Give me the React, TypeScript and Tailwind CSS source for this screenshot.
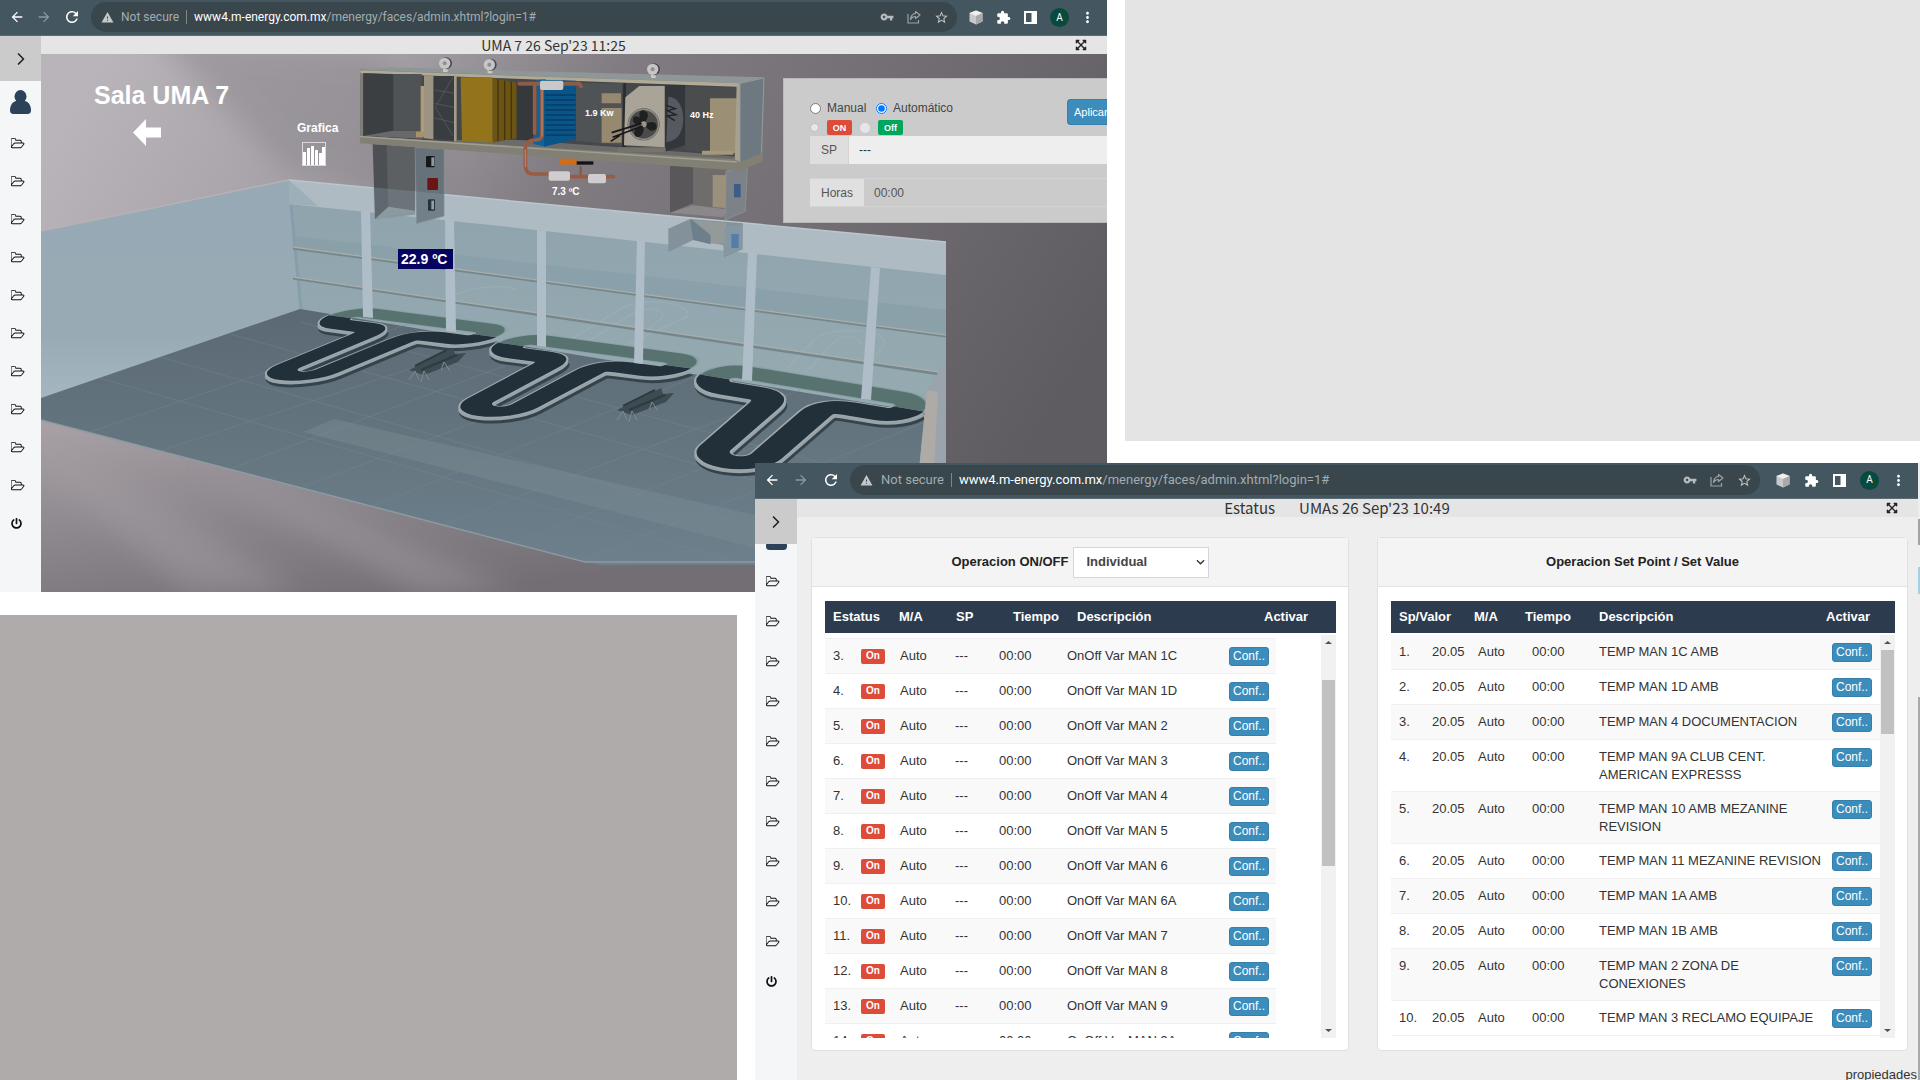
import React, { useState } from 'react';
import { ChevronRight } from 'lucide-react';
import { FaExpandArrowsAlt, FaPowerOff } from 'react-icons/fa';
import {
  MdArrowBack,
  MdArrowForward,
  MdExtension,
  MdMoreVert,
  MdRefresh,
  MdStarBorder,
  MdVpnKey,
  MdWarning,
} from 'react-icons/md';

interface OnOffRow {
  id: number;
  description: string;
}

interface SetPointRow {
  id: number;
  description: string;
}

const onOffRows: OnOffRow[] = [
  { id: 3, description: 'OnOff Var MAN 1C' },
  { id: 4, description: 'OnOff Var MAN 1D' },
  { id: 5, description: 'OnOff Var MAN 2' },
  { id: 6, description: 'OnOff Var MAN 3' },
  { id: 7, description: 'OnOff Var MAN 4' },
  { id: 8, description: 'OnOff Var MAN 5' },
  { id: 9, description: 'OnOff Var MAN 6' },
  { id: 10, description: 'OnOff Var MAN 6A' },
  { id: 11, description: 'OnOff Var MAN 7' },
  { id: 12, description: 'OnOff Var MAN 8' },
  { id: 13, description: 'OnOff Var MAN 9' },
  { id: 14, description: 'OnOff Var MAN 9A' },
];

const setPointRows: SetPointRow[] = [
  { id: 1, description: 'TEMP MAN 1C AMB' },
  { id: 2, description: 'TEMP MAN 1D AMB' },
  { id: 3, description: 'TEMP MAN 4 DOCUMENTACION' },
  { id: 4, description: 'TEMP MAN 9A CLUB CENT. AMERICAN EXPRESSS' },
  { id: 5, description: 'TEMP MAN 10 AMB MEZANINE REVISION' },
  { id: 6, description: 'TEMP MAN 11 MEZANINE REVISION' },
  { id: 7, description: 'TEMP MAN 1A AMB' },
  { id: 8, description: 'TEMP MAN 1B AMB' },
  { id: 9, description: 'TEMP MAN 2 ZONA DE CONEXIONES' },
  { id: 10, description: 'TEMP MAN 3 RECLAMO EQUIPAJE' },
];

const menuItems = Array.from({ length: 10 }, (_, i) => i);

const FolderIcon = () => (
  <svg viewBox="0 0 1920 1792" className="h-[13px] w-[14px]" fill="#111" aria-hidden="true">
    <path d="M1717 931q0-35-53-35h-1088q-40 0-85.500 21.500t-71.500 52.500l-294 363q-18 24-18 40 0 35 53 35h1088q40 0 86-22t71-53l294-363q18-22 18-39zM576 768h768v-160q0-40-28-68t-68-28h-576q-40 0-68-28t-28-68v-64q0-40-28-68t-68-28h-320q-40 0-68 28t-28 68v853l256-315q44-53 116-87.500t140-34.500zM1845 931q0 62-46 120l-295 363q-43 53-116 87.500t-140 34.500h-1088q-92 0-158-66t-66-158v-960q0-92 66-158t158-66h320q92 0 158 66t66 158v32h544q92 0 158 66t66 158v160h192q54 0 99 24.500t67 70.500q15 32 15 68z" />
  </svg>
);

const UserIcon = () => (
  <svg viewBox="0 0 21 24" className="h-6 w-[21px] shrink-0" fill="#2c4259" aria-hidden="true">
    <ellipse cx="10.500" cy="6.500" rx="6" ry="6.500" />
    <path d="M6 11h9c4 1 6 5 6 9.500 0 2.500-1.500 3.500-3.500 3.500h-14C1.500 24 0 23 0 20.500 0 16 2 12 6 11z" />
  </svg>
);

const ShareIcon = () => (
  <svg viewBox="0 0 14 14" className="h-[14px] w-[14px]" fill="none" stroke="#9aa4a8" strokeWidth="1.200" aria-hidden="true">
    <path d="M1 4v9h10.500v-3" />
    <path d="M8.500 1.500 13 5 8.500 8.500V6.500C6 6.500 4.500 7.500 3.500 9.500 3.800 6 5.500 3.800 8.500 3.500z" strokeLinejoin="round" />
  </svg>
);

const CubeIcon = () => (
  <svg viewBox="0 0 14 15" className="h-[15px] w-[14px]" aria-hidden="true">
    <path d="M7 0.500 13.500 3v8.500L7 14.500 0.500 11.500V3z" fill="#c9c9c9" />
    <path d="M7 0.500 13.500 3 7 6 0.500 3z" fill="#efefef" />
    <path d="M7 6 13.500 3v8.500L7 14.500z" fill="#a9a9a9" />
  </svg>
);

const SidePanelIcon = () => (
  <svg viewBox="0 0 13 13" className="h-[13px] w-[13px]" aria-hidden="true">
    <path d="M0 0h13v13H0zM2 2v9h5.500V2z" fill="#fff" fillRule="evenodd" />
  </svg>
);

interface ChromeBarProps {
  navClass: string;
  urlClass: string;
  actionsClass: string;
}

const ChromeBar: React.FC<ChromeBarProps> = ({ navClass, urlClass, actionsClass }) => (
  <div className="flex h-9 shrink-0 items-center border-b border-[#5b6b73] bg-[#44565f] pr-[14px] pb-px font-['Roboto',sans-serif]">
    <div className={navClass}>
      <button aria-label="Back"><MdArrowBack size={16} color="#fff" /></button>
      <button aria-label="Forward"><MdArrowForward size={16} color="#8e999e" /></button>
      <button aria-label="Reload"><MdRefresh size={18} color="#fff" /></button>
    </div>
    <div className="flex h-[30px] min-w-0 flex-1 items-center rounded-full bg-[#39464c] pr-2 pl-[10px] text-[#a3acb0]">
      <MdWarning size={13} color="#c3c8ca" className="shrink-0" />
      <div className={urlClass}>
        <span>Not secure</span>
        <span className="mx-[7px] h-[14px] w-px bg-[#7d878c]" />
        <span className="text-white">www4.m-energy.com.mx</span>
        <span>/menergy/faces/admin.xhtml?login=1#</span>
      </div>
      <div className="ml-auto flex items-center gap-[13px]">
        <button aria-label="Passwords"><MdVpnKey size={14} color="#b4bbbe" /></button>
        <button aria-label="Share"><ShareIcon /></button>
        <button aria-label="Bookmark"><MdStarBorder size={15} color="#c3c8ca" /></button>
      </div>
    </div>
    <div className={actionsClass}>
      <button aria-label="Cube extension"><CubeIcon /></button>
      <button aria-label="Extensions"><MdExtension size={15} color="#fff" /></button>
      <button aria-label="Side panel"><SidePanelIcon /></button>
      <button className="flex h-[19px] w-[19px] items-center justify-center rounded-full bg-[#064b3d] text-[10px] text-white">A</button>
      <button aria-label="Menu" className="-mx-[3px]"><MdMoreVert size={17} color="#fff" /></button>
    </div>
  </div>
);

interface SidebarProps {
  widthClass: string;
  userClass: string;
  itemClass: string;
}

const Sidebar: React.FC<SidebarProps> = ({ widthClass, userClass, itemClass }) => (
  <nav className={widthClass}>
    <button aria-label="Open menu" className="flex h-[45px] shrink-0 items-center justify-center bg-[#cbcbcb] text-[#222]">
      <ChevronRight size={20} strokeWidth={2} />
    </button>
    <div className={userClass}>
      <UserIcon />
    </div>
    <ul>
      {menuItems.map((item) => (
        <li key={item} className={itemClass}>
          <a href="#" aria-label={`Folder ${item + 1}`}><FolderIcon /></a>
        </li>
      ))}
      <li className={itemClass}>
        <button aria-label="Power"><FaPowerOff size={11} color="#111" /></button>
      </li>
    </ul>
  </nav>
);

const TitleBar: React.FC<{ titleClass: string; children: React.ReactNode }> = ({ titleClass, children }) => (
  <header className="flex h-[18px] shrink-0 items-center bg-[#e5e5e5] font-['Noto_Sans_CJK_SC',sans-serif] leading-[18px] text-[#333]">
    <h1 className={titleClass}>{children}</h1>
    <button aria-label="Fullscreen" className="w-[41px] pl-[9px]">
      <FaExpandArrowsAlt size={12} color="#222" />
    </button>
  </header>
);

// One carousel outline, laid onto the floor by a matrix per position
const beltBack = 'M0 20A20 20 0 0 1 20 0H174A20 20 0 0 1 194 20';
const beltFront =
  'M194 20A20 20 0 0 1 174 40H144Q120 40 120 62V168A25.500 25.500 0 0 1 69 168V64Q69 40 50 40H20A20 20 0 0 1 0 20';

const belts = [
  { x: 354, y: 311, plane: '0.747 0.098 -0.693 0.287' },
  { x: 523, y: 338, plane: '0.862 0.115 -0.604 0.322' },
  { x: 724, y: 369, plane: '1 0.165 -0.460 0.400' },
];

const columns = [
  '361,210 370,211 373,318 363,317',
  '445,219 454,220 456,332 446,331',
  '537,230 546,231 546,347 537,346',
  '637,240 645,241 643,364 634,363',
  '748,252 757,253 752,381 742,380',
  '871,267 880,268 871,400 861,399',
];

const Belt: React.FC<{ x: number; y: number; plane: string }> = ({ x, y, plane }) => (
  <g fill="none">
    <g transform={`matrix(${plane} ${x} ${y})`}>
      <path d={beltBack} stroke="#87a1a6" strokeWidth="33" />
      <path d={beltBack} stroke="#58726f" strokeWidth="28" />
    </g>
    <g transform={`matrix(${plane} ${x + 1} ${y + 6})`}>
      <path d={beltFront} stroke="#34434c" strokeWidth="34" />
    </g>
    <g transform={`matrix(${plane} ${x} ${y + 3})`}>
      <path d={beltFront} stroke="#98a3a9" strokeWidth="34" />
    </g>
    <g transform={`matrix(${plane} ${x} ${y})`}>
      <path d={beltFront} stroke="#a0abb0" strokeWidth="34" />
      <path d={beltFront} stroke="#22303a" strokeWidth="30" />
    </g>
  </g>
);

const Bench: React.FC<{ x: number; y: number }> = ({ x, y }) => (
  <g transform={`translate(${x} ${y})`}>
    <path d="M0 22 44 0l2 6 11-1-8 9-34 13z" fill="#3d4b52" />
    <path d="M6 18 38 2M12 22 48 7" stroke="#2d3b42" strokeWidth="2" />
    <path d="m0 32 6-9 4 9m2 2 3-11 5 9M32 22l3-8 6 9" stroke="#7e8c92" fill="none" />
  </g>
);

// Air handler, drawn at three times its size on the scene
const AirHandler = () => (
  <g transform="translate(340 40) scale(0.33333)">
    {/* ducts */}
    <path d="M98 312 225 322v190L105 537z" fill="#4c5054" />
    <path d="M140 316 225 322v190l-80-8z" fill="#5c6063" />
    <path d="M105 537 145 500l80 12v12z" fill="#8c979d" />
    <path d="M225 322 312 328v200L230 550z" fill="#66717a" stroke="#7f8a91" strokeWidth="2" />
    <path d="M98 442 312 462v66l-82 22-5-38-120 25z" fill="#8aa2ad" opacity="0.300" />
    <rect x="258" y="348" width="26" height="34" rx="3" fill="#14181b" />
    <rect x="274" y="352" width="9" height="26" fill="#8f989d" />
    <rect x="262" y="414" width="32" height="36" rx="3" fill="#6b1414" />
    <rect x="264" y="478" width="21" height="34" rx="3" fill="#26323a" />
    <rect x="274" y="482" width="8" height="26" fill="#93a1a8" />
    <path d="M990 378 1060 380v110l-70 28z" fill="#595759" />
    <path d="M1060 380h100v128l-100-12z" fill="#6f6c6c" />
    <path d="M1118 405h42v100l-42-4z" fill="#9a907c" />
    <path d="M990 518 1060 496l100 12-10 24z" fill="#8a888b" />
    <path d="M1158 394 1222 380 1216 514 1155 540z" fill="#7c8288" stroke="#93989c" strokeWidth="2" />
    <rect x="1182" y="432" width="20" height="40" fill="#3f5b87" />
    <path d="M985 566 1050 537 1208 550 1206 628 1152 652 1150 615 1060 600 985 636z" fill="#82919a" />
    <path d="M1050 537 1112 585v28l-52-13z" fill="#6c7f8b" />
    <path d="M1060 540 1160 548v62h-48v-25z" fill="#949a9a" />
    <path d="M1155 560 1208 552v76l-56 24z" fill="#8597a2" />
    <rect x="1174" y="582" width="22" height="42" fill="#557cab" />

    {/* casing */}
    <path d="M60 88 1272 112 1268 362 1200 390 60 306z" fill="#7d7c76" />
    <path d="M60 90 150 82 1272 112 1198 130z" fill="#8f9697" />
    <path d="M60 91 1198 130 1194 144 62 100z" fill="#b1aa97" />
    <path d="M70 100 1190 140v220L70 288z" fill="#45484a" />
    <path d="M70 100 160 102v170L70 288z" fill="#3b3f42" />
    <path d="M70 288 160 272 245 272 250 296z" fill="#68696a" />
    <path d="M160 102h85v170h-85z" fill="#4f5355" />
    <path d="M242 138h12v150h-12z" fill="#b09b79" />
    <path d="M252 106h28v192l-28-3z" fill="#9b9482" />
    <path d="M228 275h24v17h-24z" fill="#a89169" />
    <path d="M282 108h62v192l-62-4z" fill="#3a3d40" />
    <path d="m338 112-52 90 52 84M284 150l58 10M284 190l58 12M284 234l58 14" stroke="#505559" strokeWidth="3" fill="none" />
    <path d="M342 106 350 107V306L342 304z" fill="#a39c8a" />
    <path d="M350 300 540 300 1080 340 1190 350v14L350 306z" fill="#6b6b69" />
    <path d="M362 112h96v196l-92-6z" fill="#93741a" />
    <path d="M458 114 530 128v166l-72 14z" fill="#6c5413" />
    <path d="M474 118v186M494 122v178M514 126v170" stroke="#41340f" strokeWidth="4" />
    <path d="M530 128h55v172h-55z" fill="#35393c" />
    <path d="M590 120 616 118v202l-36-8V285h10z" fill="#08659f" />
    <path d="M612 120 708 122v176l-96 22z" fill="#0a5588" />
    <path d="M616 165h90M616 180h90M616 195h90M616 210h90M616 225h90M616 240h90M616 255h90M616 270h90M616 285h90" stroke="#073d66" strokeWidth="4" />
    <path d="M708 130h138v186l-138-14z" fill="#505356" />
    <path d="M785 160h58v30h-58zM785 204h60v104h-60z" fill="#96896f" />
    <path d="M850 130 858 130V322H846z" fill="#2b2d2f" />
    <path d="M975 135h60v180l-60 20z" fill="#33363a" />
    <path d="M985 170c34 2 48 40 44 80-4 34-20 54-50 56z" fill="#545a60" />
    <path d="m980 196 26 10-24 6 26 12-26 4 22 14" stroke="#1f2224" strokeWidth="4" fill="none" />
    <path d="M856 172 898 138 974 138V322L852 316z" fill="#aaa498" />
    <circle cx="911" cy="253" r="48" fill="#4a4b4a" />
    <circle cx="911" cy="253" r="45" fill="none" stroke="#8d8a82" strokeWidth="5" />
    <path d="M911 253c-22-30-12-44 0-42 20 6 14 24 0 42zm0 0c34-16 42 0 38 12-12 16-26 4-38-12zm0 0c4 36-16 44-26 34-8-16 8-26 26-34zm0 0c-32 6-36-12-30-22 14-8 24 6 30 22z" fill="#1f2121" />
    <circle cx="911" cy="253" r="9" fill="#99968d" />
    <path d="M815 278 905 250M818 292l90-34M812 304l28-18" stroke="#161718" strokeWidth="5" />
    <path d="M832 322h145v14H832z" fill="#75736b" />
    <path d="M1036 142h154v205l-154-18z" fill="#4b4c4e" />
    <path d="M1110 175h80v165h-80z" fill="#9b8f75" />
    <path d="M1086 332h94v12h-94z" fill="#a6987b" />
    <path d="M1190 134 1200 130V390L1184 372z" fill="#a7a190" />
    <path d="M1200 130 1272 114 1264 345 1200 385z" fill="#6d7880" stroke="#949c9f" strokeWidth="3" />
    <path d="M60 288 1184 358 1200 366 1268 338v26l-68 28L60 310z" fill="#827f75" />
    <path d="M60 290 1190 366" stroke="#a39f93" strokeWidth="4" />

    {/* pipes */}
    <g fill="none" strokeLinecap="round" strokeLinejoin="round">
      <path d="M538 131h180l5 8" stroke="#8c5b49" strokeWidth="12" />
      <path d="M584 140v140M606 140v148q-4 12-20 12-28 0-30 24v54q2 24 24 24h42M690 410h130" stroke="#995b43" strokeWidth="11" />
      <path d="M606 150v138M556 330v50" stroke="#c48a70" strokeWidth="3" />
      <path d="M722 410v-28" stroke="#8c5b49" strokeWidth="8" />
    </g>
    <rect x="600" y="122" width="70" height="28" rx="6" fill="#c9c9c9" />
    <rect x="626" y="394" width="64" height="28" rx="6" fill="#cfcdcd" />
    <rect x="744" y="402" width="54" height="28" rx="6" fill="#cfcdcd" />
    <path d="M658 356h52v18h-52z" fill="#cf6d1d" />
    <path d="M710 364h50v10h-50z" fill="#141414" />

    {/* gauges */}
    {[
      [316, 70],
      [450, 74],
      [940, 88],
    ].map(([cx, cy]) => (
      <g key={cx}>
        <path d={`M${cx - 7} ${cy + 10}h14v16h-14z`} fill="#c9c9c9" />
        <circle cx={cx + 2} cy={cy} r="18" fill="#4a484b" />
        <circle cx={cx - 2} cy={cy} r="17" fill="#c6c6c7" />
        <circle cx={cx - 2} cy={cy} r="6" fill="#8f8f92" />
      </g>
    ))}
  </g>
);

const RoomScene = () => (
  <svg viewBox="41 54 1066 538" preserveAspectRatio="xMinYMin slice" className="block h-full w-full" role="img" aria-label="Sala UMA 7">
    <defs>
      <linearGradient id="wall" x1="0" y1="0.200" x2="1" y2="0.500">
        <stop offset="0" stopColor="#b9b4b9" />
        <stop offset="0.250" stopColor="#a5a0a6" />
        <stop offset="0.450" stopColor="#817c82" />
        <stop offset="1" stopColor="#5f5c61" />
      </linearGradient>
      <linearGradient id="ground" x1="0" y1="0" x2="0.600" y2="1">
        <stop offset="0" stopColor="#aaa2a7" />
        <stop offset="0.500" stopColor="#8d888e" />
        <stop offset="1" stopColor="#726e74" />
      </linearGradient>
      <linearGradient id="side" x1="0" y1="0" x2="0" y2="1">
        <stop offset="0" stopColor="#96a9b4" />
        <stop offset="0.700" stopColor="#98abb5" />
        <stop offset="1" stopColor="#a5b6c0" />
      </linearGradient>
      <linearGradient id="glass" x1="0" y1="0" x2="0" y2="1">
        <stop offset="0" stopColor="#8ea3ac" />
        <stop offset="1" stopColor="#97abb2" />
      </linearGradient>
      <linearGradient id="floor" x1="0" y1="0" x2="0" y2="1">
        <stop offset="0" stopColor="#5b6974" />
        <stop offset="1" stopColor="#6d808b" />
      </linearGradient>
      <filter id="soft"><feGaussianBlur stdDeviation="14" /></filter>
    </defs>
    <rect x="41" y="54" width="1066" height="538" fill="url(#wall)" />
    <path d="M150 30 380 54 480 210 290 175z" fill="#89858b" opacity="0.500" filter="url(#soft)" />
    <path d="M41 418 580 562 760 563V592H41z" fill="url(#ground)" />
    <path d="M41 470 190 592H300L41 430zM200 470 420 592H520L300 500z" fill="#a39da2" opacity="0.500" filter="url(#soft)" />

    {/* room */}
    <path d="M41 231 289 180 301 309 41 399z" fill="url(#side)" />
    <path d="M41 231 289 180" stroke="#b6b2b4" strokeWidth="1.500" />
    <path d="M289 180 946 242V440L300 310z" fill="url(#glass)" />
    <path d="M292 236 946 310V335L293 250z" fill="#869ca6" opacity="0.600" />
    <path d="M41 398 300 309 946 416V565H600L41 420z" fill="url(#floor)" />
    <g stroke="#7b8c96" strokeWidth="1" opacity="0.350">
      <path d="M90 432 420 320M160 451 480 346M230 469 560 345M300 488 640 360M370 507 700 375M440 526 800 390M510 545 860 405M580 562 930 420M160 357 800 540M100 378 740 563M230 334 860 510M300 322 940 495" fill="none" />
    </g>
    <path d="M303 432 334 419 755 515V548z" fill="#7b8c93" opacity="0.450" />
    <path d="M41 420 585 562H760" stroke="#8c9aa1" strokeWidth="1.500" fill="none" />
    <path d="M289 180 946 242V275L500 226 289 204z" fill="#afbbc3" />
    <path d="M289 180 946 242" stroke="#bac6cd" strokeWidth="1.500" />
    <path d="M289 180 318 206 289 204z" fill="#9db0ba" />
    <path d="M291 205 301 309" stroke="#869ea9" strokeWidth="3" />
    <g fill="none" stroke="#a1b3b9" strokeWidth="1.200" opacity="0.600">
      <path d="M570 340 622 308C640 298 690 300 688 316L626 345M590 340l42-26c10-8 36-6 30 4l-30 24" />
      <path d="M788 368 814 340C824 326 890 328 884 344L868 368M806 372l30-32c10-6 22-4 26 4" />
      <path d="M445 300c20-14 60-16 72-10" />
    </g>
    <g fill="none" strokeWidth="3">
      <path d="M293 248 946 336M293 278 946 375" stroke="#75878c" />
      <path d="M293 247 946 335M293 277 946 373" stroke="#a8adab" strokeWidth="1.500" />
    </g>

    {belts.map((belt) => (
      <Belt key={belt.x} {...belt} />
    ))}
    {columns.map((points) => (
      <polygon key={points} points={points} fill="#aebdc7" />
    ))}
    <Bench x={409} y={348} />
    <Bench x={617} y={388} />
    <path d="M927 390 946 360V470H919z" fill="#9ba3ac" />
    <path d="M927 390 938 392 934 470H919z" fill="#aeaba7" />
    <AirHandler />

    {/* chart shortcut */}
    <rect x="302.500" y="142.500" width="23" height="23" fill="none" stroke="#d9d7d9" />
    <path d="M303 152h3v13h-3zM307 148h3v17h-3zM311 146h3v19h-3zM315 150h3v15h-3zM319 153h3v12h-3zM322 147h3v18h-3z" fill="#fff" />
    <path d="M133 132.500 146 119v8.500h15v10h-15v8.500z" fill="#fff" />

    <g fill="#fff" fontFamily="'Liberation Sans', Arial, sans-serif" fontWeight="bold">
      <text x="94" y="104" fontSize="25">Sala UMA 7</text>
      <text x="297" y="132" fontSize="12">Grafica</text>
      <text x="585" y="116" fontSize="9">1.9 Kw</text>
      <text x="690" y="118" fontSize="9">40 Hz</text>
      <text x="552" y="195" fontSize="10">7.3 ºC</text>
      <rect x="398" y="249" width="55" height="20" fill="#04045f" />
      <text x="401" y="264" fontSize="14">22.9 ºC</text>
    </g>
  </svg>
);

const ControlPanel = () => {
  const [mode, setMode] = useState<'manual' | 'auto'>('auto');

  return (
    <form className="absolute top-6 right-0 w-[324px] overflow-hidden border border-r-0 border-[#b9b9b9] bg-[#cbcbcb] pt-5 pb-[15px] pl-[26px] text-xs text-[#444]">
      <div className="flex h-[21px] items-start">
        <label className="mt-px flex w-[66px] items-center gap-[6px]">
          <input type="radio" name="mode" className="h-[11px] w-[11px]" checked={mode === 'manual'} onChange={() => setMode('manual')} />
          Manual
        </label>
        <label className="mt-px flex flex-1 items-center gap-[6px]">
          <input type="radio" name="mode" className="h-[11px] w-[11px]" checked={mode === 'auto'} onChange={() => setMode('auto')} />
          Automático
        </label>
        <button type="button" className="h-[26px] w-10 shrink-0 rounded-l-sm border border-r-0 border-[#367fa9] bg-[#3c8dbc] pl-[6px] text-left text-[11px] text-white">
          Aplicar
        </button>
      </div>
      <div className="flex h-4 items-start">
        <label className="flex w-[50px] items-center gap-2">
          <input type="radio" name="power" disabled className="h-[9px] w-[9px]" />
          <span className="flex h-[15px] w-[25px] items-center justify-center rounded-xs bg-[#dd4b39] text-[9px] font-bold text-white">ON</span>
        </label>
        <label className="flex items-center gap-2">
          <span className="flex items-center">
            <input type="radio" name="power" disabled className="h-[10px] w-[10px] appearance-none rounded-full bg-[#e6e6e6]" />
          </span>
          <span className="flex h-[15px] w-[25px] items-center justify-center rounded-xs bg-[#00a65a] text-[9px] font-bold text-white">Off</span>
        </label>
      </div>
      <div className="flex h-7 bg-[#eee] text-[#555]">
        <label htmlFor="sp" className="flex items-center border-r border-[#d2d2d2] bg-[#dedede] px-[11px]">SP</label>
        <input id="sp" defaultValue="---" className="min-w-0 flex-1 px-[10px] text-[#333]" />
      </div>
      <div className="mt-[14px] flex h-[29px] border-y border-[#d4d4d4] text-[#555]">
        <label htmlFor="hours" className="flex items-center bg-[#e0e0e0] px-[11px]">Horas</label>
        <input id="hours" defaultValue="00:00" className="min-w-0 flex-1 px-[10px]" />
      </div>
    </form>
  );
};

interface ScrollTrackProps {
  thumbClass: string;
}

const ScrollTrack: React.FC<ScrollTrackProps> = ({ thumbClass }) => (
  <div className="flex w-[15px] shrink-0 flex-col bg-[#f1f1f1] px-px" aria-hidden="true">
    <svg viewBox="0 0 13 15" className="h-[15px] w-[13px] shrink-0"><path d="M3 9h7L6.500 6z" fill="#505050" /></svg>
    <div className={thumbClass} />
    <svg viewBox="0 0 13 15" className="mt-auto h-[15px] w-[13px] shrink-0"><path d="M3 6h7L6.500 9z" fill="#505050" /></svg>
  </div>
);

const ConfButton = () => (
  <button className="block h-[19px] w-10 rounded-[3px] border border-[#367fa9] bg-[#3c8dbc] text-center text-xs leading-[17px] text-white">
    Conf..
  </button>
);

const OnOffPanel = () => {
  const [operation, setOperation] = useState('Individual');

  return (
    <section className="flex min-w-0 flex-[537_537_0%] flex-col rounded-sm border border-[#e0e0e0] bg-white">
      <div className="flex h-[49px] shrink-0 items-center justify-center gap-1 border-b border-[#e2e2e2] bg-[#f4f4f4] font-bold text-[#222]">
        <label htmlFor="operation">Operacion ON/OFF</label>
        <div className="relative">
          <select
            id="operation"
            value={operation}
            onChange={(e) => setOperation(e.target.value)}
            className="h-[31px] w-[136px] appearance-none border border-[#d2d6de] bg-white pl-[13px] font-bold text-[#444]"
          >
            <option>Individual</option>
            <option>General</option>
          </select>
          <svg viewBox="0 0 10 6" className="pointer-events-none absolute top-3 right-1 h-[6px] w-[9px]" fill="none" stroke="#333" strokeWidth="1.500">
            <path d="m1 1 4 4 4-4" />
          </svg>
        </div>
      </div>
      <div className="flex min-h-0 flex-1 flex-col pt-[14px] pr-3 pb-3 pl-[13px]">
        <table className="w-full table-fixed bg-[#2c3b4e] text-left text-white">
          <thead>
            <tr className="h-8">
              <th className="w-[66px] pl-2">Estatus</th>
              <th className="w-[57px] pl-2">M/A</th>
              <th className="w-[57px] pl-2">SP</th>
              <th className="w-[64px] pl-2">Tiempo</th>
              <th className="pl-2">Descripción</th>
              <th className="w-[80px] pl-2">Activar</th>
            </tr>
          </thead>
        </table>
        <div className="mt-[2px] flex min-h-0 flex-1">
          <div className="min-w-0 flex-1 overflow-hidden pt-[3px] pr-[45px]">
            <table className="w-full table-fixed">
              <tbody>
                {onOffRows.map((row) => (
                  <tr key={row.id} className="h-[35px] border-t border-[#f0f0f0] odd:bg-[#f9f9f9]">
                    <td className="w-7 pl-2">{row.id}.</td>
                    <td className="w-[39px] pl-2">
                      <span className="flex h-[15px] w-6 items-center justify-center rounded-xs bg-[#dd4b39] text-[10px] font-bold text-white">On</span>
                    </td>
                    <td className="w-[55px] pl-2">Auto</td>
                    <td className="w-11 pl-2">---</td>
                    <td className="w-[68px] pl-2">00:00</td>
                    <td className="pl-2">{row.description}</td>
                    <td className="w-[55px] pl-2"><ConfButton /></td>
                  </tr>
                ))}
              </tbody>
            </table>
          </div>
          <ScrollTrack thumbClass="mt-[30px] h-[186px] bg-[#c1c1c1]" />
        </div>
      </div>
    </section>
  );
};

const SetPointPanel = () => (
  <section className="flex min-w-0 flex-[530_530_0%] flex-col rounded-sm border border-[#e0e0e0] bg-white">
    <div className="flex h-[49px] shrink-0 items-center justify-center border-b border-[#e2e2e2] bg-[#f4f4f4] font-bold text-[#222]">
      Operacion Set Point / Set Value
    </div>
    <div className="flex min-h-0 flex-1 flex-col pt-[14px] pr-3 pb-3 pl-[13px]">
      <table className="w-full table-fixed bg-[#2c3b4e] text-left text-white">
        <thead>
          <tr className="h-8">
            <th className="w-[75px] pl-2">Sp/Valor</th>
            <th className="w-[51px] pl-2">M/A</th>
            <th className="w-[74px] pl-2">Tiempo</th>
            <th className="pl-2">Descripción</th>
            <th className="w-[77px] pl-2">Activar</th>
          </tr>
        </thead>
      </table>
      <div className="mt-[2px] flex min-h-0 flex-1">
        <div className="min-w-0 flex-1 overflow-hidden">
          <table className="w-full table-fixed">
            <tbody>
              {setPointRows.map((row) => (
                <tr key={row.id} className="border-b border-[#f0f0f0] align-top odd:bg-[#f9f9f9]">
                  <td className="w-[33px] pt-2 pb-[7px] pl-2">{row.id}.</td>
                  <td className="w-[46px] pt-2 pb-[7px] pl-2">20.05</td>
                  <td className="w-[54px] pt-2 pb-[7px] pl-2">Auto</td>
                  <td className="w-[67px] pt-2 pb-[7px] pl-2">00:00</td>
                  <td className="pt-2 pb-[7px] pl-2">{row.description}</td>
                  <td className="w-[54px] pt-2 pb-[7px] pl-[6px]"><ConfButton /></td>
                </tr>
              ))}
            </tbody>
          </table>
        </div>
        <ScrollTrack thumbClass="h-[84px] bg-[#c1c1c1]" />
      </div>
    </div>
  </section>
);

const RoomWindow = () => (
  <section className="col-[1/3] row-[1/4] flex min-h-0 min-w-0 flex-col overflow-hidden">
    <ChromeBar
      navClass="flex w-[91px] shrink-0 items-center gap-[11px] pl-[9px]"
      urlClass="ml-[7px] flex items-center whitespace-nowrap text-xs"
      actionsClass="ml-3 flex items-center gap-[13px]"
    />
    <div className="flex min-h-0 flex-1">
      <Sidebar
        widthClass="flex w-[41px] shrink-0 flex-col bg-[#f4f6f8]"
        userClass="flex h-[43px] shrink-0 items-start justify-center pt-[9px]"
        itemClass="flex h-[38px] items-center pl-[11px]"
      />
      <main className="flex min-w-0 flex-1 flex-col">
        <TitleBar titleClass="flex flex-1 justify-center text-sm leading-[18px]">
          <span>UMA 7 26 Sep&apos;23 11:25</span>
        </TitleBar>
        <div className="relative min-h-0 flex-1 overflow-hidden">
          <RoomScene />
          <ControlPanel />
        </div>
      </main>
    </div>
  </section>
);

const StatusWindow = () => (
  <section className="z-10 col-[2/5] row-[3/6] mr-[2px] flex min-h-0 min-w-0 flex-col overflow-hidden text-[13px] leading-[18px] text-[#333]">
    <ChromeBar
      navClass="flex w-[95px] shrink-0 items-center gap-[13px] pl-[9px]"
      urlClass="ml-2 flex items-center whitespace-nowrap text-[13px]"
      actionsClass="ml-4 flex items-center gap-[14px]"
    />
    <div className="flex min-h-0 flex-1">
      <Sidebar
        widthClass="flex w-[42px] shrink-0 flex-col bg-[#f4f6f8]"
        userClass="flex h-[17px] shrink-0 items-end justify-center overflow-hidden pb-[11px]"
        itemClass="flex h-10 items-center pl-[11px]"
      />
      <main className="flex min-w-0 flex-1 flex-col bg-[#eee]">
        <TitleBar titleClass="flex flex-1 justify-center gap-6 text-[15px] leading-[18px]">
          <span>Estatus</span>
          <span>UMAs 26 Sep&apos;23 10:49</span>
        </TitleBar>
        <div className="flex min-h-0 flex-1 gap-[28px] pt-5 pr-[10px] pl-[14px]">
          <OnOffPanel />
          <SetPointPanel />
        </div>
        <footer className="h-[29px] shrink-0 overflow-hidden pt-[15px] pr-px text-right">propiedades</footer>
      </main>
    </div>
  </section>
);

const App: React.FC = () => {
  return (
    <div className="grid h-screen w-full grid-cols-[minmax(0,755fr)_minmax(0,352fr)_minmax(0,18fr)_minmax(0,795fr)] grid-rows-[minmax(0,441fr)_minmax(0,22fr)_minmax(0,129fr)_minmax(0,23fr)_minmax(0,465fr)] overflow-hidden bg-white font-['Liberation_Sans',Arial,sans-serif]">
      <RoomWindow />
      <div className="col-[4/5] row-[1/2] bg-[#e5e4e4]" />
      <div className="col-[1/2] row-[5/6] mr-[18px] bg-[#aeabaa]" />
      <StatusWindow />
      <div className="col-[4/5] row-[3/6] flex w-[2px] flex-col justify-self-end bg-[#eee] pt-14" aria-hidden="true">
        <div className="h-[26px] bg-[#a3a3a3]" />
        <div className="mt-[22px] h-[27px] bg-[#a5cfe6]" />
        <div className="mt-[103px] flex-1 bg-[#a9a9a9]" />
      </div>
    </div>
  );
};

export default App;
